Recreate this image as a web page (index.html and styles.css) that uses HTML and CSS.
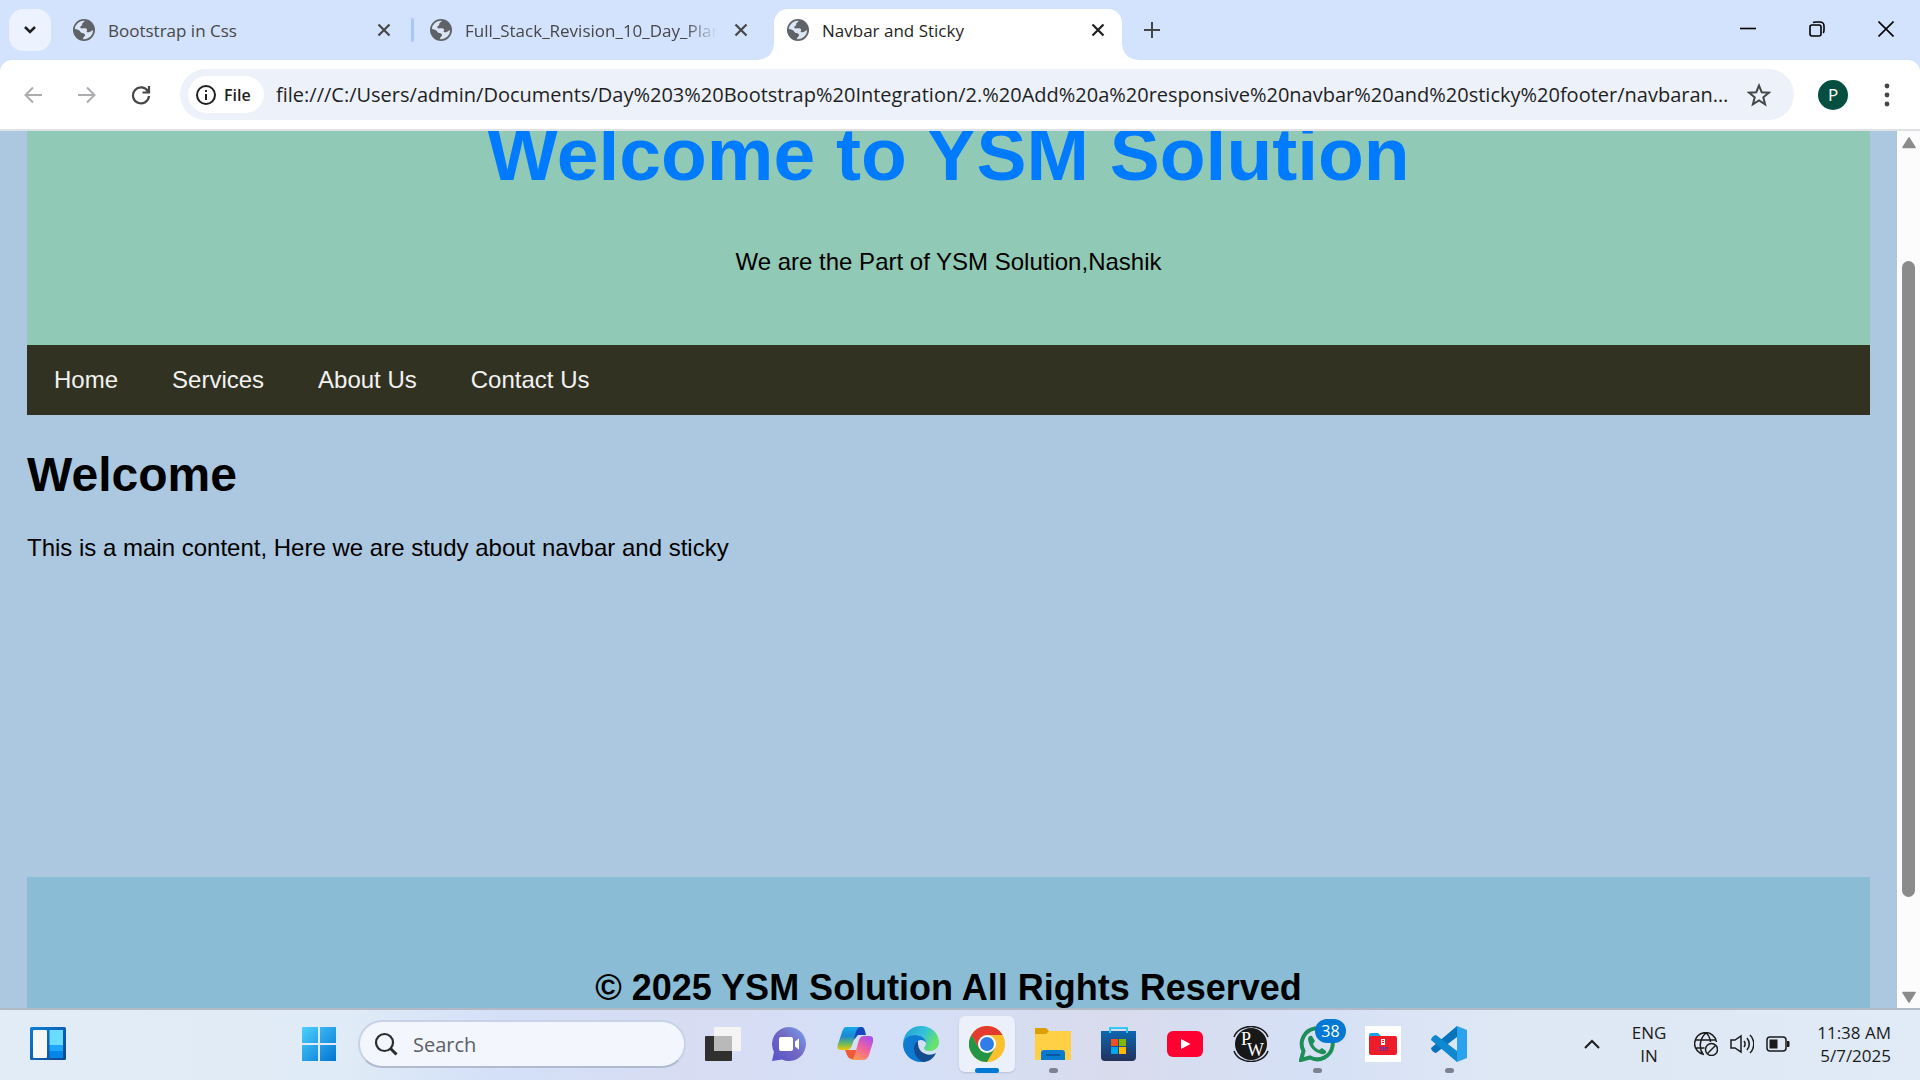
FILE: index.html
```html
<!DOCTYPE html>
<html lang="en">
<head>
<meta charset="utf-8">
<title>Navbar and Sticky</title>
<link rel="stylesheet" href="styles.css">
</head>
<body>
<svg class="defs" aria-hidden="true">
  <symbol id="globe" viewBox="0 0 24 24"><circle cx="12" cy="12" r="12" fill="#5f6368"/><path d="M13 2c-1 2-3 2-3 4s-2 1-2 3 3 1 5 1 3 1 2 3 3 2 5 0l2-1a10 10 0 0 1-11 10c0-3 3-3 2-5s-4-1-5-3-4-3-6-3A10 10 0 0 1 13 2z" fill="#dce5f6"/></symbol>
  <symbol id="x" viewBox="0 0 14 14"><path d="M1.5 1.5l11 11M12.500 1.500l-11 11" fill="none" stroke="currentColor" stroke-width="2.200"/></symbol>
</svg>
<div class="screen">
  <header class="tabs">
    <button class="tab-search" aria-label="Search tabs"><svg width="14" height="10" viewBox="0 0 14 10"><path d="M2 2l5 5 5-5" fill="none" stroke="#1f1f1f" stroke-width="2.500"/></svg></button>
    <div class="tab divided"><svg class="fav"><use href="#globe"/></svg><span class="tab-title">Bootstrap in Css</span><button class="close" aria-label="Close tab"><svg><use href="#x"/></svg></button></div>
    <div class="tab"><svg class="fav"><use href="#globe"/></svg><span class="tab-title faded">Full_Stack_Revision_10_Day_Plan</span><button class="close" aria-label="Close tab"><svg><use href="#x"/></svg></button></div>
    <div class="tab active"><svg class="fav"><use href="#globe"/></svg><span class="tab-title">Navbar and Sticky</span><button class="close" aria-label="Close tab"><svg><use href="#x"/></svg></button></div>
    <button class="new-tab" aria-label="New tab"><svg width="16" height="16" viewBox="0 0 16 16"><path d="M8 0v16M0 8h16" stroke="#444746" stroke-width="2"/></svg></button>
    <div class="window-buttons">
      <button aria-label="Minimize"><svg width="16" height="16" viewBox="0 0 16 16"><path d="M0 7.500h16" stroke="#000" stroke-width="1.600"/></svg></button>
      <button aria-label="Restore"><svg width="16" height="16" viewBox="0 0 16 16"><g fill="none" stroke="#000" stroke-width="1.600"><rect x="1" y="4" width="11" height="11" rx="2"/><path d="M4 1.500C5 1 6 1 7 1h4a4 4 0 0 1 4 4v4c0 1 0 2-.8 3"/></g></svg></button>
      <button aria-label="Close"><svg width="16" height="16" viewBox="0 0 16 16"><path d="M.5.5l15 15M15.500.5l-15 15" stroke="#000" stroke-width="1.600"/></svg></button>
    </div>
  </header>
  <div class="toolbar">
    <div class="history">
      <button aria-label="Back"><svg width="18" height="18" viewBox="0 0 18 18"><path d="M18 9H1.500M9 1.500L1.500 9 9 16.500" fill="none" stroke="#aaacae" stroke-width="2"/></svg></button>
      <button aria-label="Forward"><svg width="18" height="18" viewBox="0 0 18 18"><path d="M0 9h16.500M9 1.500L16.500 9 9 16.500" fill="none" stroke="#aaacae" stroke-width="2"/></svg></button>
      <button aria-label="Reload"><svg width="20" height="20" viewBox="0 0 20 20"><path d="M17 6.500A8 8 0 1 0 18 11M18 1v6.500h-6.500" fill="none" stroke="#444746" stroke-width="2.200"/></svg></button>
    </div>
    <div class="omnibox">
      <button class="chip"><svg width="20" height="20" viewBox="0 0 20 20"><circle cx="10" cy="10" r="9" fill="none" stroke="#1f1f1f" stroke-width="2"/><path d="M10 9v6M10 5v2" stroke="#1f1f1f" stroke-width="2"/></svg>File</button>
      <input class="url" aria-label="Address" value="file:///C:/Users/admin/Documents/Day%203%20Bootstrap%20Integration/2.%20Add%20a%20responsive%20navbar%20and%20sticky%20footer/navbarandsticky.html">
      <button class="star" aria-label="Bookmark this page"><svg width="24" height="24" viewBox="0 0 24 24"><path d="M12 2.500l2.700 6.700 7.100.5-5.500 4.600 1.800 7L12 17.400l-6.100 3.900 1.800-7-5.500-4.600 7.100-.5z" fill="none" stroke="#444746" stroke-width="2"/></svg></button>
    </div>
    <button class="avatar" aria-label="Profile">P</button>
    <button class="menu" aria-label="Menu"><svg width="6" height="26" viewBox="0 0 6 26"><g fill="#444746"><circle cx="3" cy="4" r="2.400"/><circle cx="3" cy="13" r="2.400"/><circle cx="3" cy="22" r="2.400"/></g></svg></button>
  </div>
  <div class="browser-body">
    <div class="viewport" id="viewport">
      <div class="page">
        <div class="hero"><h1>Welcome to YSM Solution</h1><p>We are the Part of YSM Solution,Nashik</p></div>
        <nav class="navbar"><a href="#home">Home</a><a href="#services">Services</a><a href="#about">About Us</a><a href="#contact">Contact Us</a></nav>
        <main class="content"><h1>Welcome</h1><p>This is a main content, Here we are study about navbar and sticky</p></main>
        <footer class="footer"><h2>© 2025 YSM Solution All Rights Reserved</h2></footer>
      </div>
    </div>
    <div class="scrollbar">
      <svg width="14" height="12" viewBox="0 0 14 12"><path d="M7 1l6 9.500H1z" fill="#8b8b8b" stroke="#8b8b8b" stroke-width="1.500" stroke-linejoin="round"/></svg>
      <div class="track"><div class="thumb"></div></div>
      <svg width="14" height="12" viewBox="0 0 14 12"><path d="M7 11l6-9.500H1z" fill="#8b8b8b" stroke="#8b8b8b" stroke-width="1.500" stroke-linejoin="round"/></svg>
    </div>
  </div>
  <div class="taskbar">
    <div class="widgets"><button aria-label="Widgets"><svg width="36" height="34" viewBox="0 0 36 34"><defs><linearGradient id="w" x2="1" y2="1"><stop stop-color="#0a7fd8"/><stop offset="1" stop-color="#10458c"/></linearGradient></defs><rect width="36" height="33" rx="1.500" fill="url(#w)"/><rect x="3" y="3" width="14" height="28" rx="1" fill="#f6f6f6"/><path d="M19.500 3H33v15H19.500z" fill="#69dcff"/><path d="M19.500 18H33v6H19.500z" fill="#1fa5fa"/><path d="M19.500 24H33v7H19.500z" fill="#0786ea"/></svg></button></div>
    <div class="apps">
      <button aria-label="Start"><svg width="36" height="36" viewBox="0 0 36 36"><defs><linearGradient id="s" gradientUnits="userSpaceOnUse" x1="0" y1="0" x2="36" y2="36"><stop stop-color="#4fd3ff"/><stop offset="1" stop-color="#0072d0"/></linearGradient></defs><path d="M1 1h16v16H1zM19 1h16v16H19zM1 19h16v16H1zM19 19h16v16H19z" fill="url(#s)"/></svg></button>
      <label class="search"><svg width="24" height="24" viewBox="0 0 24 24"><circle cx="10.500" cy="10.500" r="8.500" fill="none" stroke="#2a2a2a" stroke-width="2.200"/><path d="M16.500 16.500l6 6" stroke="#2a2a2a" stroke-width="3"/></svg><input type="text" aria-label="Search" placeholder="Search"></label>
      <button aria-label="Task view"><svg width="36" height="36" viewBox="0 0 36 36"><rect y="10" width="27" height="25" rx="1" fill="#30302f"/><rect x="9" y="1" width="27" height="24" rx="1" fill="#f4f4f4"/><path d="M9 10h18v15H9z" fill="#b9b9b9"/></svg></button>
      <button aria-label="Chat"><svg width="36" height="36" viewBox="0 0 36 36"><defs><linearGradient id="t" x1="1" x2="0" y2=".8"><stop stop-color="#78a5f5"/><stop offset=".5" stop-color="#736bc2"/><stop offset="1" stop-color="#5b54c8"/></linearGradient></defs><path d="M18 1a17 17 0 1 1-7 32.500L1 35l2-9A17 17 0 0 1 18 1z" fill="url(#t)"/><rect x="8" y="11" width="14" height="14" rx="2" fill="#fff"/><path d="M24 15.500l4-3v11l-4-3z" fill="#fff"/></svg></button>
      <button aria-label="Copilot"><svg width="36" height="36" viewBox="0 0 36 36"><defs><linearGradient id="c1" x2="0" y2="1"><stop stop-color="#17a8e8"/><stop offset=".4" stop-color="#1989d4"/><stop offset=".75" stop-color="#73bc57"/><stop offset="1" stop-color="#f3c800"/></linearGradient><linearGradient id="c2" x1=".8" x2=".2" y2="1"><stop stop-color="#a84df2"/><stop offset=".5" stop-color="#f2639a"/><stop offset="1" stop-color="#ffa04b"/></linearGradient></defs><path d="M19 1h6c2 0 3 3 4 8h-8l-5 6z" fill="#1748bd"/><path d="M9 1h15c-4 0-5 4-7 12-2 7-3 11-7 11H4c-4 0-4-3-3-6L5 6c1-3 2-5 4-5z" fill="url(#c1)"/><path d="M8 24h11v9h-4c-4 0-5-4-7-9z" fill="#f15939"/><path d="M27 10h5c4 0 5 3 4 6l-4 13c-1 3-3 5-6 5H13c4 0 5-5 7-13s3-11 7-11z" fill="url(#c2)"/></svg></button>
      <button aria-label="Edge"><svg width="36" height="36" viewBox="0 0 36 36"><defs><linearGradient id="e1" x2="1" y2=".4"><stop stop-color="#1ba0d8"/><stop offset=".6" stop-color="#35c1d8"/><stop offset="1" stop-color="#66e36a"/></linearGradient></defs><path d="M0 17C1 6 9 0 18 0c11 0 18 8 18 16 0 5-4 9-9 9-4 0-6-1-6-3 0-1 2-2 2-5 0-4-5-8-10-8C7 9 2 12 0 17z" fill="url(#e1)"/><path d="M0 18C1 12 6 9 12 9c7 0 11 4 11 8-1-2-3-3-5-3-4 0-6 4-6 8 0 7 6 12 14 12-2 1-5 2-8 2C8 36 0 28 0 18z" fill="#0c7bd1"/><path d="M15 15c-5 2-7 15 5 21 6 0 11-4 13-9-7 4-19 1-18-12z" fill="#134c90"/></svg></button>
      <button class="current" aria-label="Chrome"><svg width="36" height="36" viewBox="0 0 36 36"><circle cx="18" cy="18" r="18" fill="#fbc02d"/><path d="M2.400 9A18 18 0 0 1 33.600 9H18l-7.800 13.500z" fill="#e33b2e"/><path d="M2.400 9A18 18 0 0 0 18 36l7.800-13.500H10.200z" fill="#249447"/><circle cx="18" cy="18" r="9" fill="#fff"/><circle cx="18" cy="18" r="7" fill="#2f7de9"/></svg></button>
      <button class="running" aria-label="File Explorer"><svg width="36" height="36" viewBox="0 0 36 36"><path d="M0 2h11l4 4v7H0z" fill="#dca006"/><path d="M0 8h11l3-3h22v29H0z" fill="#ffcf45"/><path d="M6 34V27a3 3 0 0 1 3-3h18a3 3 0 0 1 3 3v7z" fill="#087bd0"/><path d="M11 29h14" stroke="#064c91" stroke-width="1.500"/></svg></button>
      <button aria-label="Store"><svg width="36" height="36" viewBox="0 0 36 36"><defs><linearGradient id="m" x2="0" y2="1"><stop stop-color="#0c66b1"/><stop offset="1" stop-color="#24315b"/></linearGradient></defs><path d="M0 5h35v26a4 4 0 0 1-4 4H4a4 4 0 0 1-4-4z" fill="url(#m)"/><path d="M9 7V2h17v5" fill="none" stroke="#35c6f1" stroke-width="2"/><path d="M10 13h7v7h-7z" fill="#f25022"/><path d="M18 13h7v7h-7z" fill="#7fba00"/><path d="M10 21h7v7h-7z" fill="#00a4ef"/><path d="M18 21h7v7h-7z" fill="#ffb900"/></svg></button>
      <button aria-label="YouTube"><svg width="36" height="36" viewBox="0 0 36 36"><rect y="5" width="36" height="26" rx="6" fill="#ff0033"/><path d="M14 13l9.500 5-9.500 5z" fill="#fff"/></svg></button>
      <button aria-label="PW"><svg width="36" height="36" viewBox="0 0 36 36"><circle cx="18" cy="18" r="16" fill="#181818"/><path d="M1 11C6-3 30-3 35 11M1 25c5 14 29 14 34 0" fill="none" stroke="#181818" stroke-width="1.500"/><text class="pw-letter" x="8" y="19">P</text><text class="pw-letter" x="14" y="30">W</text></svg></button>
      <button class="running" aria-label="WhatsApp"><svg width="36" height="36" viewBox="0 0 36 36"><path d="M2 34l2.500-9A15.500 15.500 0 1 1 11 31.500z" fill="none" stroke="#1f8f59" stroke-width="4"/><path d="M9 13c0-3 3-4 4-3l3 5-2 3c1 3 4 5 6 6l3-2 4 3c1 2-2 4-5 3C15 26 10 21 9 13z" fill="#1f8f59"/></svg><span class="badge">38</span></button>
      <button aria-label="Zip"><svg width="36" height="36" viewBox="0 0 36 36"><path d="M0 0h36v36H0z" fill="#fff"/><path d="M4 9a2 2 0 0 1 2-2h7l3 3v6H4z" fill="#19a2e8"/><rect x="4" y="10" width="28" height="19" rx="2" fill="#ed1c28"/><path d="M16 13h4v6h-4z" fill="#fff"/><path d="M17 14h2v1h-2zM17 16h2v1h-2z" fill="#ed1c28"/><text class="zip-letter" x="18" y="25">ZIP</text></svg></button>
      <button class="running" aria-label="Visual Studio Code"><svg width="36" height="36" viewBox="0 0 36 36"><path d="M26 0v11L5 27c-2 0-5-3-5-5z" fill="#0873bd"/><path d="M26 36V25L5 9c-2 0-5 3-5 5z" fill="#1088cf"/><path d="M26 0l10 4v28l-10 4z" fill="#2aa2ee"/></svg></button>
    </div>
    <div class="tray">
      <button aria-label="Hidden icons"><svg width="16" height="10" viewBox="0 0 16 10"><path d="M1 9l7-7 7 7" fill="none" stroke="#1b1b1b" stroke-width="2"/></svg></button>
      <button class="lang">ENG<br>IN</button>
      <button class="status" aria-label="Network, volume, battery">
        <svg width="24" height="24" viewBox="0 0 24 24"><g fill="none" stroke="#1b1b1b" stroke-width="1.500"><path d="M10 22.500A11 11 0 1 1 22.500 10M1.500 8h21M1.500 16h9M12 1C5 7 5 17 9 22M12 1c3 2 4 5 4.500 9"/><circle cx="17.500" cy="17.500" r="6"/><path d="M13.500 21.500l8-8"/></g></svg>
        <svg width="24" height="24" viewBox="0 0 24 24"><g fill="none" stroke="#1b1b1b" stroke-width="1.500"><path d="M1 8v8h4l6 4V4L5 8zM14 9c1.500 2 1.500 4 0 6M17 6c3 4 3 8 0 12M20 3c5 5 5 13 0 18"/></g></svg>
        <svg width="24" height="24" viewBox="0 0 24 24"><rect x="1" y="5" width="19" height="14" rx="3" fill="none" stroke="#1b1b1b" stroke-width="1.500"/><path d="M3.500 7.500h8v9h-8zM21 9h1.500a1 1 0 0 1 1 1v4a1 1 0 0 1-1 1H21z" fill="#1b1b1b"/></svg>
      </button>
      <button class="clock">11:38 AM<br>5/7/2025</button>
    </div>
  </div>
</div>
<script>
  document.getElementById('viewport').scrollTop = 141;
</script>
</body>
</html>
```
FILE: styles.css
```css
* { box-sizing: border-box; }
body { margin: 0; font-family: "Open Sans", sans-serif; }
button { border: 0; padding: 0; background: none; font: inherit; color: inherit; display: flex; align-items: center; justify-content: center; }
.defs { position: absolute; width: 0; height: 0; }
.screen { height: 100vh; display: flex; flex-direction: column; overflow: hidden; background: #d3e2fd; }

/* tab strip */
.tabs { flex: none; height: 60px; display: flex; align-items: flex-end; padding-left: 9px; }
.tab-search { width: 42px; height: 42px; margin: 0 9px 9px 0; border-radius: 14px; background: #ecf2fe; }
.tab { width: 357px; height: 51px; padding: 0 22px 9px 13px; display: flex; align-items: center; position: relative; color: #474747; font-size: 17px; }
.fav { flex: none; width: 22px; height: 22px; margin-right: 13px; }
.tab-title { flex: none; width: 252px; padding-top: 2px; overflow: hidden; white-space: nowrap; line-height: 24px; }
.faded { -webkit-mask-image: linear-gradient(to right, #000 220px, transparent 252px); mask-image: linear-gradient(to right, #000 220px, transparent 252px); }
.close { width: 48px; flex: none; }
.close svg { width: 14px; height: 14px; }
.divided::after { content: ""; position: absolute; right: 3px; top: 9px; width: 3px; height: 24px; background: #a8c7fa; border-radius: 2px; }
.active { width: 348px; background: #fff; border-radius: 14px 14px 0 0; color: #1f1f1f; }
.active::before, .active::after { content: ""; position: absolute; bottom: 0; width: 15px; height: 15px; }
.active::before { right: 100%; background: radial-gradient(circle at 0 0, transparent 14px, #fff 15px); }
.active::after { left: 100%; background: radial-gradient(circle at 100% 0, transparent 14px, #fff 15px); }
.new-tab { width: 42px; height: 42px; margin: 0 0 9px 9px; }
.window-buttons { margin-left: auto; display: flex; height: 60px; }
.window-buttons button { width: 69px; height: 58px; }

/* toolbar */
.toolbar { flex: none; height: 71px; display: flex; align-items: center; background: #fff; border-radius: 12px 12px 0 0; border-bottom: 2px solid #dfe1e4; }
.history { display: flex; padding: 0 12px 0 6px; }
.history button { width: 54px; height: 48px; }
.omnibox { flex: 1; min-width: 0; height: 51px; display: flex; align-items: center; padding: 0 10px 0 8px; background: #ecf1fa; border-radius: 26px; }
.chip { flex: none; width: 76px; height: 37px; padding-left: 8px; gap: 8px; justify-content: flex-start; border-radius: 19px; background: #fff; color: #1f1f1f; font-size: 16px; font-weight: 600; }
.url { flex: 1; min-width: 0; margin-left: 12px; padding: 0; border: 0; background: none; color: #1f1f1f; font: 20px "Open Sans", sans-serif; text-overflow: ellipsis; }
.star { width: 50px; height: 48px; flex: none; }
.avatar { flex: none; width: 30px; height: 30px; margin: 0 26px 0 24px; border-radius: 50%; background: #044f40; color: #fff; font-size: 17px; }
.menu { flex: none; width: 26px; margin: 0 20px 0 0; }

/* page */
.browser-body { flex: 1; min-height: 0; display: flex; }
.viewport { flex: 1; min-width: 0; overflow: hidden; background: #abc8e0; }
.page { padding: 27px; font: 24px/27px "Liberation Sans", Arial, sans-serif; color: #000; }
.hero { padding: 45px; background: #90c9b5; text-align: center; }
.hero h1 { margin: 49px 0 51px; color: #007bff; font-size: 75px; line-height: 86px; }
.hero p { margin: 0 0 25px; }
.navbar { display: flex; background: #323222; }
.navbar a { padding: 21px 27px 22px; color: #f2f2f2; text-decoration: none; }
.content { min-height: 462px; padding-top: 32px; }
.content h1 { margin: 0 0 32px; font-size: 48px; line-height: 55px; }
.content p { margin: 0; }
.footer { padding: 60px; background: #8abcd5; text-align: center; }
.footer h2 { margin: 30px 0; font-size: 36px; line-height: 41px; }
.scrollbar { flex: none; width: 23px; padding: 6px 0 5px; display: flex; flex-direction: column; align-items: center; background: #fcfcfc; }
.track { flex: 1; width: 13px; padding: 112px 0 94px; display: flex; flex-direction: column; }
.thumb { flex: 1; border-radius: 7px; background: #8b8b8b; }

/* taskbar */
.taskbar { flex: none; height: 72px; padding-bottom: 2px; display: flex; align-items: center; border-top: 2px solid #b1b8c6; background: linear-gradient(90deg, #e2ecf6, #dfebf6 18%, #d3e0f8 26%, #d7dcf2 36%, #d4e0f8 46%, #d8dbec 58%, #d5e0f6 68%, #dee7f4 78%, #e0ebf7); color: #1b1b1b; }
.widgets { flex: none; width: 286px; padding-left: 30px; }
.apps { flex: none; display: flex; align-items: center; }
.apps > button { width: 56px; height: 56px; margin: 0 5px; position: relative; border-radius: 6px; }
.search { width: 328px; height: 48px; margin: 0 4px 0 6px; display: flex; align-items: center; gap: 15px; padding: 0 14px; border: 2px solid #c8d2e6; border-bottom-color: #b1bbd0; border-radius: 24px; background: #f3f6fd; }
.search input { min-width: 0; flex: 1; padding: 0; border: 0; background: none; font: 20px "Open Sans", sans-serif; }
.search input::placeholder { color: #5c5f66; opacity: 1; }
.apps .current { background: #ebf0fa; box-shadow: 0 1px 2px #b9c1d5; }
.current::after, .running::after { content: ""; position: absolute; bottom: -1px; left: 50%; margin-left: -4px; width: 9px; height: 5px; border-radius: 3px; background: #7e8290; }
.current::after { width: 24px; margin-left: -12px; background: #0078d4; }
.badge { position: absolute; left: 26px; top: 3px; width: 31px; height: 24px; border-radius: 12px; background: #0078d4; color: #fff; font-size: 16px; line-height: 24px; text-align: center; }
.pw-letter { font: 18px "Liberation Serif", serif; fill: #fff; }
.zip-letter { font: bold 6px "Liberation Sans", sans-serif; fill: #5537b8; text-anchor: middle; }
.tray { margin-left: auto; padding-right: 29px; display: flex; align-items: center; font-size: 17px; line-height: 23px; }
.tray > button { height: 60px; }
.lang { width: 50px; margin: 0 20px 0 24px; text-align: center; }
.status { gap: 12px; }
.clock { width: 101px; text-align: right; justify-content: flex-end; white-space: nowrap; }
```
